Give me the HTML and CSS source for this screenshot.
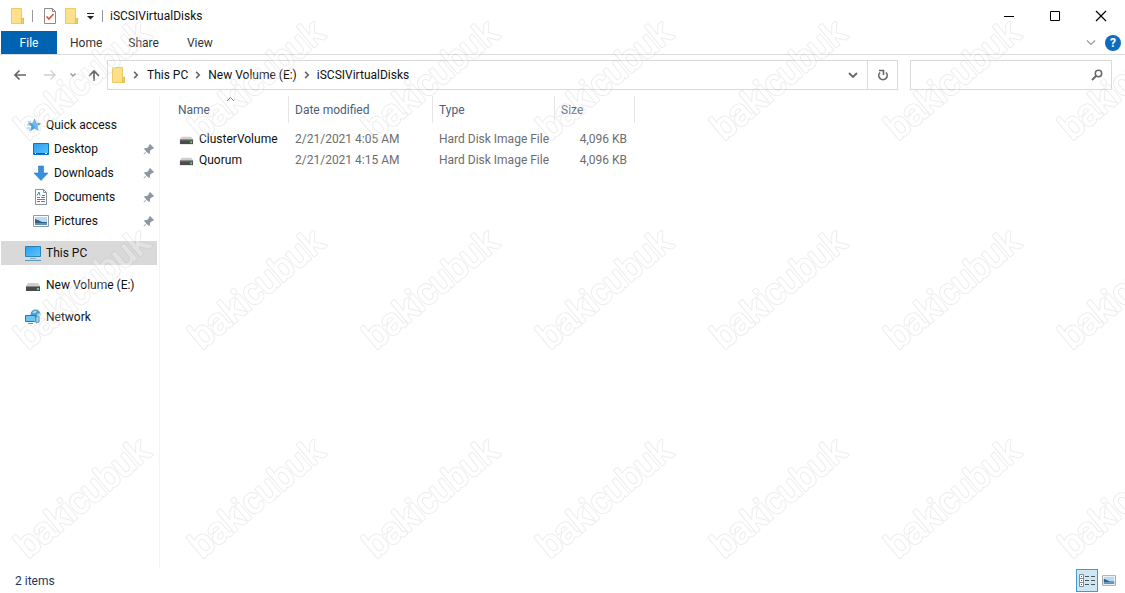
FILE: index.html
```html
<!DOCTYPE html>
<html lang="en">
<head>
  <meta charset="utf-8">
  <title>iSCSIVirtualDisks</title>
  <link rel="stylesheet" href="styles.css">
</head>
<body>
  <!-- shared icons -->
  <svg class="defs" aria-hidden="true">
    <defs>
      <linearGradient id="blueFill" x1="0" y1="0" x2="1" y2="1">
        <stop offset="0" stop-color="#2b9df0"/>
        <stop offset="1" stop-color="#5cc6fb"/>
      </linearGradient>
    </defs>
    <symbol id="folder" viewBox="0 0 16 18">
      <path d="M1.500 1.500h10v12h2v3h-12z" fill="#ffe08a" stroke="#edcb62"/>
      <path d="M11.500 12l2-1v5.500h-2z" fill="#f5d06a" stroke="#e3bd4f"/>
    </symbol>
    <symbol id="drive" viewBox="0 0 16 16">
      <path d="M3 6h10l2 3H1z" fill="#cfcfcf"/>
      <path d="M1 9h14v5H1z" fill="#4b4b4b"/>
      <path d="M1 9h14v1H1z" fill="#8a8a8a"/>
      <path d="M12 11h2v2h-2z" fill="#4fe06a"/>
    </symbol>
    <symbol id="pin" viewBox="0 0 12 12">
      <path d="M7 1l4 4-1 1-1 0-2 2 0 2-1 1-2.300-2.300L1 11.500.5 11l2.800-2.700L1 6l1-1h2l2-2V2z" fill="#8b97a3"/>
    </symbol>
    <symbol id="crumb" viewBox="0 0 8 8">
      <path d="M2.500 1.500L5 4 2.500 6.500" fill="none" stroke="#666" stroke-width="1.300"/>
    </symbol>
    <symbol id="picture" viewBox="0 0 16 12">
      <path d="M.5.500h15v11H.5z" fill="#fff" stroke="#8f9ba5"/>
      <path d="M2 2h12v8H2z" fill="#b5dbf6"/>
      <path d="M2 4l3 1 4 2 5 0v1H2z" fill="#33617f"/>
      <path d="M2 8h12v2H2z" fill="#5d93bd"/>
    </symbol>
  </svg>

  <div class="window">
    <header class="titlebar">
      <svg class="folder-icon"><use href="#folder"/></svg>
      <span class="divider"></span>
      <button class="quick props" aria-label="Properties">
        <svg width="14" height="16" viewBox="0 0 14 16"><path d="M1.500.500h8l3 3v12h-11z" fill="#fff" stroke="#8b8b8b"/><path d="M9.500.500v3h3" fill="none" stroke="#8b8b8b"/><path d="M3.500 8.500l2.500 2.500 4.500-5" fill="none" stroke="#e2572b" stroke-width="1.700"/></svg>
      </button>
      <button class="quick" aria-label="New folder"><svg class="folder-icon"><use href="#folder"/></svg></button>
      <button class="quick more" aria-label="Customize toolbar">
        <svg width="9" height="7" viewBox="0 0 9 7"><path d="M1 .5h7" stroke="#222"/><path d="M1 3h7L4.500 6.500z" fill="#222"/></svg>
      </button>
      <span class="divider"></span>
      <h1 class="title">iSCSIVirtualDisks</h1>
      <div class="window-buttons">
        <button aria-label="Minimize"><svg width="12" height="12"><path d="M1 6.500h10" stroke="#000"/></svg></button>
        <button aria-label="Maximize"><svg width="12" height="12"><path d="M1.500 1.500h9v9h-9z" fill="none" stroke="#000"/></svg></button>
        <button aria-label="Close"><svg width="12" height="12"><path d="M1 1l10 10M11 1L1 11" stroke="#000" stroke-width="1.200"/></svg></button>
      </div>
    </header>

    <nav class="tabs" aria-label="Ribbon">
      <button class="tab file">File</button>
      <button class="tab">Home</button>
      <button class="tab">Share</button>
      <button class="tab">View</button>
      <button class="expand" aria-label="Expand the ribbon"><svg width="10" height="7"><path d="M1 1.500l4 4 4-4" fill="none" stroke="#999" stroke-width="1.200"/></svg></button>
      <button class="help" aria-label="Help">?</button>
    </nav>

    <div class="navbar">
      <button class="nav-button" aria-label="Back"><svg width="14" height="12"><path d="M13 6H2M6.500 1.500L2 6l4.500 4.500" fill="none" stroke="#666" stroke-width="1.700"/></svg></button>
      <button class="nav-button" aria-label="Forward"><svg width="14" height="12"><path d="M1 6h11M7.500 1.500L12 6l-4.500 4.500" fill="none" stroke="#cfcfcf" stroke-width="1.300"/></svg></button>
      <button class="nav-button small" aria-label="Recent locations"><svg width="8" height="6"><path d="M1.500 1.500L4 4l2.500-2.500" fill="none" stroke="#999" stroke-width="1.400"/></svg></button>
      <button class="nav-button up" aria-label="Up"><svg width="14" height="13"><path d="M7 12V2M2 7l5-5 5 5" fill="none" stroke="#666" stroke-width="1.700"/></svg></button>
      <div class="address">
        <svg class="folder-icon"><use href="#folder"/></svg>
        <svg class="crumb"><use href="#crumb"/></svg>
        <a href="#">This PC</a>
        <svg class="crumb"><use href="#crumb"/></svg>
        <a href="#">New Volume (E:)</a>
        <svg class="crumb"><use href="#crumb"/></svg>
        <a href="#">iSCSIVirtualDisks</a>
        <button class="history" aria-label="Previous locations"><svg width="10" height="7"><path d="M1 1l4 4 4-4" fill="none" stroke="#666" stroke-width="1.800"/></svg></button>
        <button class="refresh" aria-label="Refresh"><svg width="12" height="12" viewBox="0 0 12 12"><path d="M9 3.500A4.200 4.200 0 1 1 3 3.500" fill="none" stroke="#666" stroke-width="1.600"/><path d="M2 1.500h4.500v4.500" fill="none" stroke="#666" stroke-width="1.600"/></svg></button>
      </div>
      <label class="search">
        <input type="text" aria-label="Search">
        <svg width="12" height="12" viewBox="0 0 12 12"><circle cx="7.500" cy="4.500" r="3.200" fill="none" stroke="#666" stroke-width="1.500"/><path d="M5 7L1 11" stroke="#666" stroke-width="2"/></svg>
      </label>
    </div>

    <div class="content">
      <nav class="sidebar" aria-label="Folders">
        <a class="item" href="#">
          <svg class="icon" viewBox="0 0 16 16"><path d="M9.500 2l1.800 4.200 4.200.3-3.200 2.800 1 4.200-3.800-2.300L5.700 13.500l1-4.200L3.500 6.500l4.200-.3z" fill="#3da5e6" stroke="#2387cb" stroke-width=".5"/><path d="M3 5h3M2 8h4M2 11h3M4 13h3" stroke="#6fbeee"/></svg>
          Quick access</a>
        <a class="item child" href="#">
          <svg class="icon" viewBox="0 0 16 16"><path d="M.5 2.500h15v11H.5z" fill="url(#blueFill)" stroke="#1274bc"/><path d="M1 12.500h14" stroke="#145f9a"/><path d="M2 12.500h1M12 12.500h2" stroke="#fff"/></svg>
          Desktop<svg class="pin"><use href="#pin"/></svg></a>
        <a class="item child" href="#">
          <svg class="icon" viewBox="0 0 16 16"><path d="M5.500 1h5v7H15l-7 7.500L1 8h4.500z" fill="#3690df" stroke="#2b7cc7" stroke-width=".6"/></svg>
          Downloads<svg class="pin"><use href="#pin"/></svg></a>
        <a class="item child" href="#">
          <svg class="icon" viewBox="0 0 16 16"><path d="M2.500.500h8l3 3v12h-11z" fill="#fff" stroke="#87919a"/><path d="M10.500.500v3h3" fill="none" stroke="#87919a"/><path d="M4 6.500L6 3l1 3.500M9 6.500h3M4 8.500h3M8 8.500h4M4 10.500h8M4 12.500h3M8 12.500h4" fill="none" stroke="#338ccc"/></svg>
          Documents<svg class="pin"><use href="#pin"/></svg></a>
        <a class="item child" href="#">
          <svg class="icon"><use href="#picture"/></svg>
          Pictures<svg class="pin"><use href="#pin"/></svg></a>
        <a class="item top selected" href="#">
          <svg class="icon" viewBox="0 0 16 16"><path d="M.5 1.500h15v10H.5z" fill="url(#blueFill)" stroke="#2b83bd"/><path d="M5 13.500h6" stroke="#8aa4b5"/><path d="M0 15.500h16" stroke="#5b96bd"/></svg>
          This PC</a>
        <a class="item top" href="#"><svg class="icon"><use href="#drive"/></svg>New Volume (E:)</a>
        <a class="item top" href="#">
          <svg class="icon" viewBox="0 0 16 16"><circle cx="10.500" cy="5.500" r="5" fill="#4c9ccc"/><path d="M7 3.500l3-2 2 1-2 2zM12 5l3-1v3l-2 2z" fill="#a7daf1"/><path d="M11 7l3 1v5l-3 1z" fill="#84c2e5" stroke="#3181b5"/><path d="M.5 6.500h10v6H.5z" fill="#69c7f6" stroke="#2379b4"/><path d="M3 14.500h5" stroke="#5b96bd"/></svg>
          Network</a>
      </nav>

      <main class="files">
        <table>
          <thead>
            <tr>
              <th class="name">Name
                <svg class="sort" width="9" height="6"><path d="M1 5l3.500-3.500L8 5" fill="none" stroke="#666"/></svg>
              </th>
              <th class="date">Date modified</th>
              <th class="type">Type</th>
              <th class="size">Size</th>
            </tr>
          </thead>
          <tbody>
            <tr>
              <td><span class="file-name"><svg class="drive"><use href="#drive"/></svg>ClusterVolume</span></td>
              <td>2/21/2021 4:05 AM</td>
              <td>Hard Disk Image File</td>
              <td>4,096 KB</td>
            </tr>
            <tr>
              <td><span class="file-name"><svg class="drive"><use href="#drive"/></svg>Quorum</span></td>
              <td>2/21/2021 4:15 AM</td>
              <td>Hard Disk Image File</td>
              <td>4,096 KB</td>
            </tr>
          </tbody>
        </table>
      </main>
    </div>

    <footer class="status">
      <span>2 items</span>
      <button class="view details" aria-label="Details view">
        <svg width="18" height="14" viewBox="0 0 18 14"><path d="M1.500.500h4v4h-4zM1.500 4.500h4v4h-4zM1.500 8.500h4v4h-4z" fill="#fff" stroke="#888"/><path d="M3 2.500h1M3 6.500h1M3 10.500h1M7 2.500h4M13 2.500h4M7 6.500h4M13 6.500h4M7 10.500h4M13 10.500h4" stroke="#555"/></svg>
      </button>
      <button class="view" aria-label="Large icons view"><svg width="14" height="11"><use href="#picture"/></svg></button>
    </footer>
  </div>

  <svg class="watermark" aria-hidden="true">
    <pattern id="mark" width="174" height="209" patternUnits="userSpaceOnUse">
      <g transform="translate(28 141) rotate(-40)">
        <text class="outer">bakicubuk</text>
        <text class="inner">bakicubuk</text>
      </g>
    </pattern>
    <rect width="100%" height="100%" fill="url(#mark)"/>
  </svg>
</body>
</html>
```
FILE: styles.css
```css
* {
  box-sizing: border-box;
}
body {
  margin: 0;
  background: #fff;
  color: #111;
  font: 12px/16px Roboto, "Noto Sans", sans-serif;
}
a {
  color: inherit;
  text-decoration: none;
}
button {
  display: flex;
  align-items: center;
  justify-content: center;
  padding: 0;
  border: 0;
  background: none;
  color: inherit;
  font: inherit;
}
svg {
  display: block;
  flex: none;
}
.defs {
  position: absolute;
  width: 0;
  height: 0;
}
.window {
  display: flex;
  flex-direction: column;
  min-height: 100vh;
}
.folder-icon {
  width: 16px;
  height: 18px;
}

/* title bar */
.titlebar {
  display: flex;
  align-items: center;
  height: 31px;
  padding: 0 1px 0 10px;
}
.divider {
  width: 1px;
  height: 12px;
  margin: 0 7px 0 6px;
  background: #999;
}
.props {
  margin: 0 7px 0 3px;
}
.more {
  width: 9px;
  margin: 2px 1px 0 6px;
}
.title {
  margin: 0;
  font-size: 12px;
  font-weight: 400;
}
.window-buttons {
  display: flex;
  margin-left: auto;
}
.window-buttons button {
  width: 46px;
  height: 30px;
}

/* ribbon tabs */
.tabs {
  display: flex;
  align-items: center;
  height: 24px;
  padding: 0 4px 0 1px;
  border-bottom: 1px solid #dadbdc;
  color: #333;
}
.tab {
  height: 23px;
  padding: 0 13px;
  min-width: 56px;
}
.file {
  background: #0063b1;
  color: #fff;
}
.expand {
  margin-left: auto;
}
.help {
  width: 16px;
  height: 16px;
  margin-left: 9px;
  border-radius: 50%;
  background: #0f6cbd;
  color: #fff;
  font-weight: 700;
}

/* address row */
.navbar {
  display: flex;
  align-items: center;
  height: 40px;
  padding: 0 13px 0 5px;
}
.nav-button {
  width: 30px;
  height: 30px;
}
.nav-button.small {
  width: 16px;
}
.nav-button.up {
  width: 26px;
}
.address {
  display: flex;
  flex: 1;
  align-items: center;
  height: 30px;
  padding-left: 3px;
  border: 1px solid #d9d9d9;
}
.crumb {
  width: 10px;
  height: 10px;
  margin: 0 5px;
}
.address .folder-icon + .crumb {
  margin: 0 6px 0 4px;
}
.history {
  width: 28px;
  height: 28px;
  margin-left: auto;
}
.refresh {
  width: 30px;
  height: 28px;
  border-left: 1px solid #d9d9d9;
}
.search {
  display: flex;
  align-items: center;
  width: 202px;
  height: 30px;
  margin-left: 12px;
  padding-right: 8px;
  border: 1px solid #d9d9d9;
}
.search input {
  flex: 1;
  min-width: 0;
  height: 28px;
  border: 0;
  outline: 0;
  background: none;
  font: inherit;
}

/* folders and files */
.content {
  display: flex;
  flex: 1;
  padding-top: 1px;
}
.sidebar {
  width: 160px;
  padding: 17px 2px 0 1px;
  border-right: 1px solid #f3f3f3;
}
.item {
  display: flex;
  align-items: center;
  gap: 5px;
  height: 24px;
  padding-left: 24px;
}
.child {
  padding-left: 32px;
}
.top {
  margin-top: 8px;
}
.selected {
  background: #d9d9d9;
}
.icon {
  width: 16px;
  height: 16px;
}
.pin {
  width: 12px;
  height: 12px;
  margin-left: auto;
  margin-right: 2px;
}
.files {
  flex: 1;
}
table {
  border-spacing: 0;
  table-layout: fixed;
  width: 475px;
  color: #6d6d6d;
}
th {
  height: 27px;
  padding: 0 0 0 6px;
  border-right: 1px solid #e5e5e5;
  color: #4c607a;
  font-weight: 400;
  text-align: left;
}
.name {
  position: relative;
  width: 129px;
  padding-left: 18px;
}
.date {
  width: 144px;
}
.type {
  width: 122px;
}
.size {
  width: 80px;
}
.sort {
  position: absolute;
  top: 0;
  left: 66px;
}
td {
  height: 21px;
  padding: 0 0 0 6px;
  white-space: nowrap;
}
tbody::before {
  content: "";
  display: block;
  height: 5px;
}
td:first-child {
  padding-left: 19px;
  color: #111;
}
td:last-child {
  padding-right: 8px;
  text-align: right;
}
.file-name {
  display: flex;
  align-items: center;
  gap: 5px;
}
.drive {
  width: 15px;
  height: 15px;
}

/* status bar */
.status {
  display: flex;
  align-items: center;
  height: 25px;
  padding: 0 5px 0 15px;
  color: #1e395b;
}
.view {
  width: 22px;
  height: 23px;
}
.details {
  margin-left: auto;
  border: 1px solid #3c9bd0;
  background: #cce8f7;
}

.watermark {
  position: fixed;
  inset: 0;
  width: 100%;
  height: 100%;
  pointer-events: none;
}
.watermark g {
  opacity: 0.25;
}
.watermark text {
  font: 36px "Liberation Sans", sans-serif;
  stroke-linejoin: round;
}
.outer {
  fill: #b4b4b4;
  stroke: #b4b4b4;
  stroke-width: 3px;
}
.inner {
  fill: #fff;
  stroke: #fff;
  stroke-width: 1px;
}
```
